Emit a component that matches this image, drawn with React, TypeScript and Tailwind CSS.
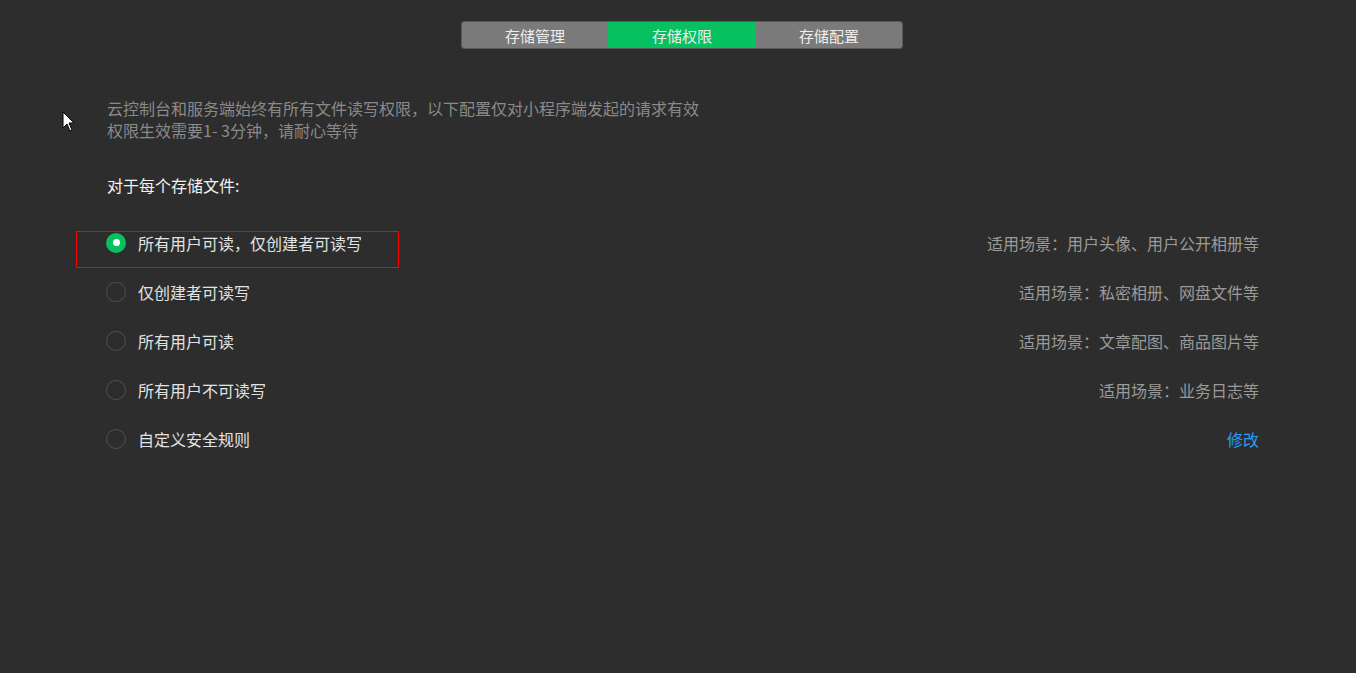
import React from "react";

const font = { fontFamily: '"Microsoft YaHei", "Noto Sans CJK SC", "Noto Sans", sans-serif' };

const options = [
  { label: "所有用户可读，仅创建者可读写", right: "适用场景：用户头像、用户公开相册等", checked: true },
  { label: "仅创建者可读写", right: "适用场景：私密相册、网盘文件等" },
  { label: "所有用户可读", right: "适用场景：文章配图、商品图片等" },
  { label: "所有用户不可读写", right: "适用场景：业务日志等" },
  { label: "自定义安全规则", right: "修改", link: true },
];

export default function App() {
  return (
    <div className="relative min-h-[673px] w-full bg-[#2d2d2d]" style={font}>
      <div className="flex justify-center pl-2 pt-[21px]">
        <div className="flex h-[28px] overflow-hidden rounded-[3px] border border-[#5a5a5a]">
          <div className="flex w-[146px] items-center justify-center pt-[2px] bg-[#7a7a7a] text-[15px] text-[#eeeeee]">存储管理</div>
          <div className="flex w-[148px] items-center justify-center pt-[2px] bg-[#07c160] text-[15px] text-[#eeeeee]">存储权限</div>
          <div className="flex w-[146px] items-center justify-center pt-[2px] bg-[#7a7a7a] text-[15px] text-[#eeeeee]">存储配置</div>
        </div>
      </div>

      <div className="pl-[106px] pr-[97px]">
        <div className="mt-[48px] pl-px text-[16px] leading-[22px] text-[#8a8a8a]">
          <div>云控制台和服务端始终有所有文件读写权限，以下配置仅对小程序端发起的请求有效</div>
          <div>权限生效需要1- 3分钟，请耐心等待</div>
        </div>
        <div className="mt-[33px] pl-px text-[16px] leading-[22px] text-[#f2f2f2]">对于每个存储文件:</div>

        <div className="mt-[22px] flex flex-col">
          {options.map((o, i) => (
            <div key={i} className="flex h-[49px] items-center justify-between">
              <div className="flex items-center">
                {o.checked ? (
                  <div className="flex h-[20px] w-[20px] items-center justify-center rounded-full bg-[#07c160]">
                    <div className="h-[7px] w-[7px] rounded-full bg-white" />
                  </div>
                ) : (
                  <div className="h-[20px] w-[20px] rounded-full border border-[#505050]" />
                )}
                <span className="ml-[12px] text-[16px] text-[#e2e2e2]">{o.label}</span>
              </div>
              <span className={o.link ? "text-[16px] text-[#2a9cf0]" : "text-[16px] text-[#9a9a9a]"}>{o.right}</span>
            </div>
          ))}
        </div>
      </div>

      <div className="absolute left-[76px] top-[231px] h-[37px] w-[323px] border border-[#ff0000]" />

      <svg className="absolute left-[62px] top-[111px]" width="14" height="22" viewBox="0 0 14 22">
        <path d="M1 1 L1 17 L5 13 L8 20 L10 19 L7 12 L12 12 Z" fill="#ffffff" stroke="#000000" strokeWidth="1" />
      </svg>
    </div>
  );
}
